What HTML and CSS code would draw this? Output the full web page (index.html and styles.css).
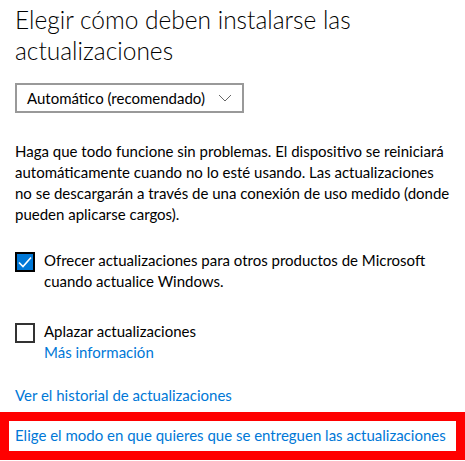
FILE: index.html
```html
<!DOCTYPE html>
<html lang="es">
<head>
    <meta charset="UTF-8">
    <title>Windows Update</title>
    <link rel="stylesheet" href="styles.css">
</head>
<body>
    <div class="page">
        <h1 class="title">Elegir cómo deben instalarse las actualizaciones</h1>

        <div class="select">
            <span>Automático (recomendado)</span>
            <svg class="chevron" width="14" height="8" viewBox="0 0 14 8">
                <path d="M1 1 L7 7 L13 1" fill="none" stroke="#666" stroke-width="1"/>
            </svg>
        </div>

        <p class="desc">Haga que todo funcione sin problemas. El dispositivo se reiniciará automáticamente cuando no lo esté usando. Las actualizaciones no se descargarán a través de una conexión de uso medido (donde pueden aplicarse cargos).</p>

        <div class="check checked">
            <span class="box">
                <svg width="16" height="16" viewBox="0 0 16 16">
                    <path d="M2 8.5 L6 12.5 L14 3.5" fill="none" stroke="#fff" stroke-width="1.6"/>
                </svg>
            </span>
            <div class="label">Ofrecer actualizaciones para otros productos de Microsoft cuando actualice Windows.</div>
        </div>

        <div class="check">
            <span class="box"></span>
            <div class="label">
                Aplazar actualizaciones
                <a class="link" href="#">Más información</a>
            </div>
        </div>

        <a class="link history" href="#">Ver el historial de actualizaciones</a>
    </div>

    <div class="highlight">
        <a class="link" href="#">Elige el modo en que quieres que se entreguen las actualizaciones</a>
    </div>
</body>
</html>
```

FILE: styles.css
```css
body {
    margin: 0;
    background: #fff;
    color: #000;
    font-family: Lato, 'Noto Sans', sans-serif;
    font-size: 15px;
    line-height: 21px;
}
.page {
    padding: 0 15px;
}
.title {
    margin: 0;
    padding-top: 4px;
    font-size: 24.5px;
    font-weight: 300;
    line-height: 31px;
    width: 360px;
}
.select {
    display: flex;
    align-items: center;
    gap: 13px;
    width: max-content;
    height: 26px;
    margin-top: 17px;
    padding: 0 10px;
    border: 2px solid #999;
}
.chevron {
    display: block;
}
.desc {
    margin: 28px 0 0;
}
.check {
    display: flex;
    gap: 9px;
    margin-top: 25px;
}
.check + .check {
    margin-top: 29px;
}
.box {
    flex: none;
    width: 16px;
    height: 16px;
    margin-top: 2px;
    border: 2px solid #333;
    display: flex;
    align-items: center;
    justify-content: center;
}
.check.checked .box {
    background: #0078d7;
    border-color: #000;
}
.label {
    width: 390px;
}
.link {
    display: block;
    color: #0078d7;
    text-decoration: none;
}
.history {
    margin-top: 22px;
}
.highlight {
    margin-top: 6px;
    border: 9px solid #f00;
    padding: 4px 6px 5px;
    white-space: nowrap;
}
```
